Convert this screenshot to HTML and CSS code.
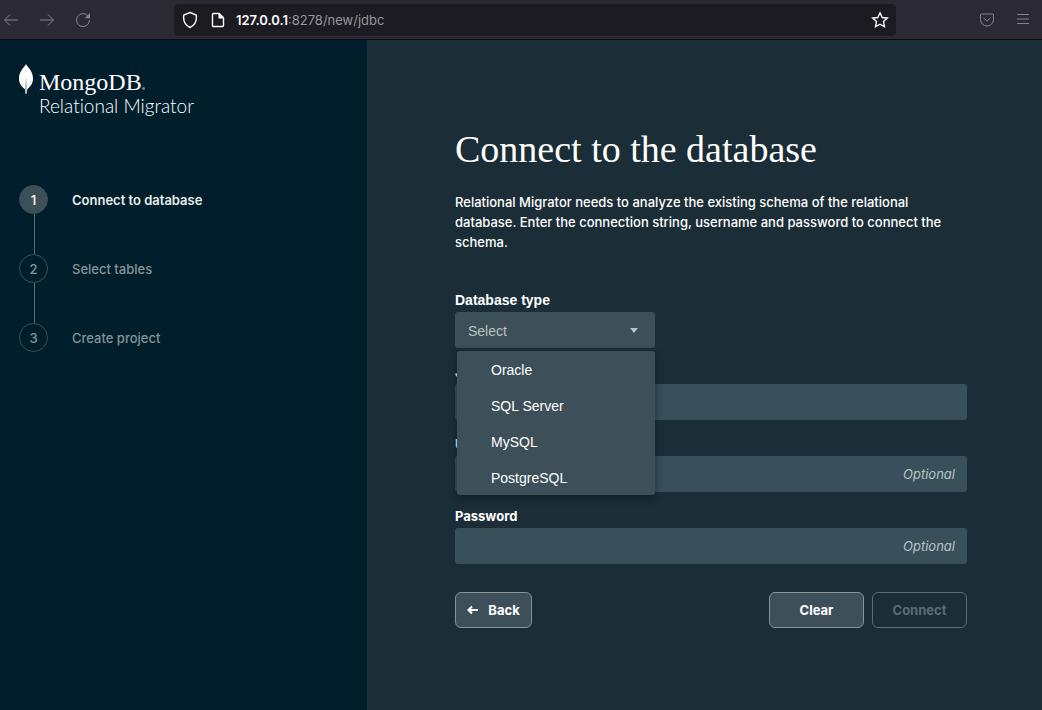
FILE: index.html
```html
<!DOCTYPE html>
<html lang="en">
<head>
<meta charset="utf-8">
<title>MongoDB Relational Migrator</title>
<link rel="stylesheet" href="styles.css">
</head>
<body>
<header class="toolbar">
  <nav class="toolbar-nav" aria-label="Browser">
    <button class="icon-button" type="button" aria-label="Go back">
      <svg width="16" height="16" viewBox="0 0 16 16"><path d="M15 8H2M7 2.5 1.5 8 7 13.5"/></svg>
    </button>
    <button class="icon-button" type="button" aria-label="Go forward">
      <svg width="16" height="16" viewBox="0 0 16 16"><path d="M1 8h13M9 2.5 14.500 8 9 13.500"/></svg>
    </button>
    <button class="icon-button" type="button" aria-label="Reload">
      <svg width="16" height="16" viewBox="0 0 16 16"><path d="M13.200 4.200A6.500 6.500 0 1 0 14.500 8"/><path class="solid" d="M15 1v5.300H9.700z"/></svg>
    </button>
  </nav>
  <div class="address">
    <svg width="16" height="18" viewBox="0 0 16 18"><path d="M8 1.500 14.200 4c.8 5.500-1.200 10-6.200 12.500C3 14 1 9.500 1.800 4z"/></svg>
    <svg class="page-icon" width="14" height="16" viewBox="0 0 14 16"><path d="M2.500 1.500H8L12.500 6v7.500a1 1 0 0 1-1 1h-9a1 1 0 0 1-1-1v-11a1 1 0 0 1 1-1z"/><path class="solid" d="M7.500 1H8.500L13 5.500v1H7.500z"/></svg>
    <span class="url"><b>127.0.0.1</b>:8278/new/jdbc</span>
    <button class="icon-button star" type="button" aria-label="Bookmark this page">
      <svg width="18" height="18" viewBox="0 0 18 18"><path d="m9 1.800 2.200 4.700 5.100.6-3.800 3.500 1 5.100L9 13.200l-4.500 2.500 1-5.100-3.800-3.500 5.100-.6z"/></svg>
    </button>
  </div>
  <div class="toolbar-tools">
    <button class="icon-button" type="button" aria-label="Save to Pocket">
      <svg width="16" height="16" viewBox="0 0 16 16"><path d="M2.500 2h11a1 1 0 0 1 1 1v4.500a6.500 6.500 0 0 1-13 0V3a1 1 0 0 1 1-1zM4.700 6 8 9.200 11.300 6"/></svg>
    </button>
    <button class="icon-button" type="button" aria-label="Menu">
      <svg width="14" height="16" viewBox="0 0 14 16"><path d="M1 2.500h12M1 7h12M1 11.500h12"/></svg>
    </button>
  </div>
</header>
<div class="app">
  <aside class="sidebar">
    <div class="brand">
      <svg class="leaf" width="14" height="30" viewBox="0 0 14 30"><path class="blade" d="M7 0C8.500 3 14 7 14 14.500 14 20 11 23 8.300 25.200L7.800 29.500H6.500L5.900 25.200C3 23 0 20 0 14.500 0 7 5.500 3 7 0z"/><path class="stem" d="M7 11.500 7.800 22 7.600 29.500H6.500L6 25z"/></svg>
      <div>
        <div class="brand-name">MongoDB<span class="brand-dot"></span></div>
        <div class="brand-product">Relational Migrator</div>
      </div>
    </div>
    <ol class="steps">
      <li class="step current" aria-current="step"><span class="step-number">1</span>Connect to database</li>
      <li class="step"><span class="step-number">2</span>Select tables</li>
      <li class="step"><span class="step-number">3</span>Create project</li>
    </ol>
  </aside>
  <main class="content">
    <h1>Connect to the database</h1>
    <p class="intro">Relational Migrator needs to analyze the existing schema of the relational database. Enter the connection string, username and password to connect the schema.</p>
    <form class="form">
      <div class="field">
        <label class="system" for="type">Database type</label>
        <div class="select-box">
          <select id="type"><option>Select</option></select>
          <svg class="caret" width="8" height="5" viewBox="0 0 8 5"><path d="M0 0h8L4 5z"/></svg>
          <ul class="menu" role="listbox" aria-label="Database type">
            <li role="option">Oracle</li>
            <li role="option">SQL Server</li>
            <li role="option">MySQL</li>
            <li role="option">PostgreSQL</li>
          </ul>
        </div>
      </div>
      <div class="field">
        <label for="url">JDBC URL</label>
        <input id="url" type="text">
      </div>
      <div class="field">
        <label for="user">Username</label>
        <input id="user" type="text" placeholder="Optional">
      </div>
      <div class="field">
        <label for="password">Password</label>
        <input id="password" type="password" placeholder="Optional">
      </div>
      <div class="actions">
        <button class="button back" type="button">
          <svg width="12" height="10" viewBox="0 0 12 10"><path d="M11 5H2M5 1.500 1.500 5 5 8.500"/></svg>Back
        </button>
        <button class="button" type="reset">Clear</button>
        <button class="button" type="submit" disabled>Connect</button>
      </div>
    </form>
  </main>
</div>
</body>
</html>
```
FILE: styles.css
```css
* {
  box-sizing: border-box;
}

body {
  display: flex;
  flex-direction: column;
  min-height: 100vh;
  margin: 0;
  background: #1b2d36;
  color: #fff;
  font: 500 13px/20px Inter, "Liberation Sans", sans-serif;
}

svg {
  display: block;
  flex: none;
  fill: none;
  stroke: currentColor;
}

.toolbar {
  display: flex;
  align-items: center;
  height: 40px;
  padding-left: 3px;
  padding-right: 12px;
  border-bottom: 1px solid #0c0c0d;
  background: #2b2a33;
  color: #85848c;
}

.toolbar-nav {
  display: flex;
  gap: 20px;
  width: 171px;
}

.icon-button {
  padding: 0;
  border: 0;
  background: none;
  color: inherit;
}

.solid {
  fill: currentColor;
  stroke: none;
}

.address {
  display: flex;
  flex: 1;
  align-items: center;
  height: 32px;
  padding: 0 7px 0 8px;
  border-radius: 4px;
  background: #1c1b22;
  color: #fbfbfe;
}

.address svg {
  stroke-width: 1.4;
}

.page-icon {
  margin-left: 13px;
}

.url {
  flex: 1;
  margin-left: 11px;
  color: #97969e;
  font: 400 13px/20px Inter, sans-serif;
}

.url b {
  color: #fbfbfe;
  font-weight: 600;
}

.toolbar-tools {
  display: flex;
  justify-content: space-between;
  width: 134px;
  padding-left: 83px;
}

.app {
  display: flex;
  flex: 1;
}

.sidebar {
  flex: 0 0 367px;
  padding: 24px 19px;
  background: #001e2b;
}

.brand {
  display: flex;
  gap: 6px;
}

.brand-name {
  display: flex;
  align-items: center;
  padding-top: 6px;
  font: 400 24px/24px "Liberation Serif", serif;
}

.brand-dot {
  width: 3px;
  height: 3px;
  margin-top: 13px;
  border-radius: 2px;
  background: #6f8087;
}

.brand-product {
  font: 300 19px/24px Lato, sans-serif;
  font-variant-ligatures: none;
}

.blade {
  fill: #fff;
  stroke: none;
}

.stem {
  fill: #a7b5ba;
  stroke: none;
}

.steps {
  display: flex;
  flex-direction: column;
  gap: 40px;
  margin: 67px 0 0;
  padding: 0;
  list-style: none;
}

.step {
  position: relative;
  display: flex;
  align-items: center;
  gap: 24px;
  color: #889397;
}

.step-number {
  display: grid;
  place-items: center;
  width: 29px;
  height: 29px;
  border: 1px solid #3d4f58;
  border-radius: 50%;
}

.step + .step::before {
  position: absolute;
  bottom: 100%;
  left: 15px;
  width: 1px;
  height: 40px;
  background: #5c6c75;
  content: "";
}

.current {
  color: #e8edeb;
  font-weight: 600;
}

.current .step-number {
  background: #3d4f58;
}

.content {
  flex: 1;
  padding: 89px 75px 40px 88px;
}

h1 {
  margin: 0 0 23px;
  font: 400 38px/40px "Liberation Serif", serif;
}

.intro {
  max-width: 500px;
  margin: 0 0 36px;
}

.form {
  display: flex;
  flex-direction: column;
  gap: 12px;
  max-width: 512px;
}

.field {
  display: flex;
  flex-direction: column;
}

label {
  font-weight: 700;
  line-height: 24px;
}

.system {
  font: 700 14px/24px "Liberation Sans", sans-serif;
}

.select-box {
  position: relative;
  width: 200px;
}

select {
  display: block;
  width: 100%;
  height: 36px;
  padding: 2px 13px 0;
  border: 0;
  border-radius: 3px;
  appearance: none;
  background: #3d4f58;
  color: #b8c4c2;
  font: 400 14px/20px "Liberation Sans", sans-serif;
}

.caret {
  position: absolute;
  top: 16px;
  right: 17px;
}

.caret path {
  fill: #b8c4c2;
  stroke: none;
}

.menu {
  position: absolute;
  z-index: 1;
  top: 39px;
  right: 0;
  left: 2px;
  margin: 0;
  padding: 0;
  border-radius: 3px;
  background: #3d4f58;
  box-shadow: 0 3px 7px #001e2b99;
  font: 400 14px/36px "Liberation Sans", sans-serif;
  list-style: none;
}

.menu li {
  padding: 1px 34px 0;
  height: 36px;
}

input {
  width: 100%;
  height: 36px;
  padding: 0 12px;
  border: 0;
  border-radius: 3px;
  background: #394f5a;
  color: #fff;
  font: inherit;
}

input::placeholder {
  color: #b8c4c2;
  font-style: italic;
  font-weight: 400;
  text-align: right;
  opacity: 1;
}

.actions {
  display: flex;
  gap: 8px;
  padding-top: 16px;
}

.button {
  display: flex;
  align-items: center;
  justify-content: center;
  width: 95px;
  height: 36px;
  padding: 0;
  border: 1px solid #889397;
  border-radius: 6px;
  background: #3d4f58;
  color: #fff;
  font: inherit;
  font-weight: 700;
}

.button:disabled {
  border-color: #5c6c75;
  background: none;
  color: #5c6c75;
}

.back {
  gap: 9px;
  width: 77px;
  margin-right: auto;
}

.back svg {
  stroke-width: 2;
}
```
